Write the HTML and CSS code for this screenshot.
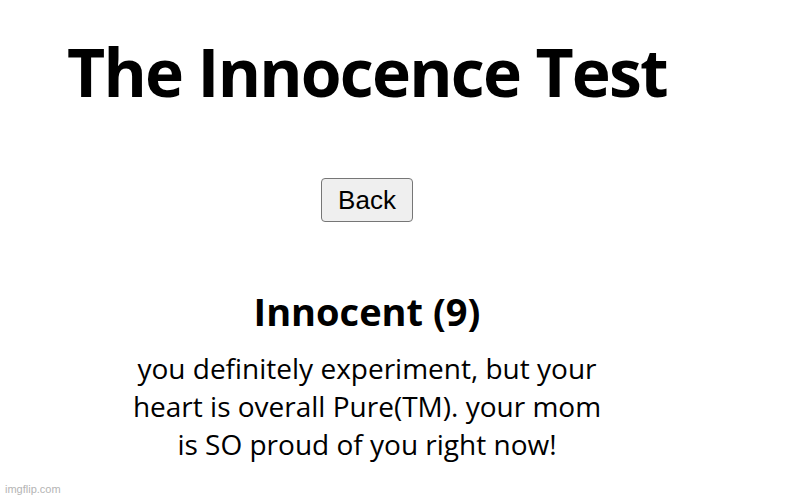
FILE: index.html
```html
<!DOCTYPE html>
<html>
<head>
<meta charset="utf-8">
<link rel="stylesheet" href="styles.css">
</head>
<body>
<div class="page">
  <h1 class="title">The Innocence Test</h1>
  <div class="actions"><button class="back">Back</button></div>
  <h2 class="result">Innocent (9)</h2>
  <p class="desc">you definitely experiment, but your<br>heart is overall Pure(TM). your mom<br>is SO proud of you right now!</p>
</div>
<div class="watermark">imgflip.com</div>
</body>
</html>
```
FILE: styles.css
```css
html, body {
  margin: 0;
  padding: 0;
  background: #fff;
  height: 500px;
  overflow: hidden;
}
body {
  position: relative;
  font-family: "Open Sans", "Noto Sans", sans-serif;
  color: #000;
}
.page {
  width: 734px;
  display: flex;
  flex-direction: column;
  align-items: center;
  padding-top: 26px;
}
.title {
  margin: 0;
  font-size: 66px;
  font-weight: 700;
  line-height: 90px;
  letter-spacing: -1.8px;
}
.actions {
  margin-top: 62px;
}
.back {
  font-family: "Liberation Sans", Arial, sans-serif;
  font-size: 26px;
  width: 92px;
  height: 44px;
  background: #efefef;
  border: 1px solid #767676;
  border-radius: 4px;
  color: #000;
  padding: 0;
}
.result {
  margin: 65px 0 0;
  font-size: 38px;
  font-weight: 700;
  line-height: 48px;
}
.desc {
  margin: 14px 0 0;
  font-size: 28px;
  line-height: 38px;
  text-align: center;
}
.watermark {
  position: absolute;
  left: 5px;
  bottom: 5px;
  font-family: "Liberation Sans", Arial, sans-serif;
  font-size: 11px;
  color: #b4b4b4;
}
```
